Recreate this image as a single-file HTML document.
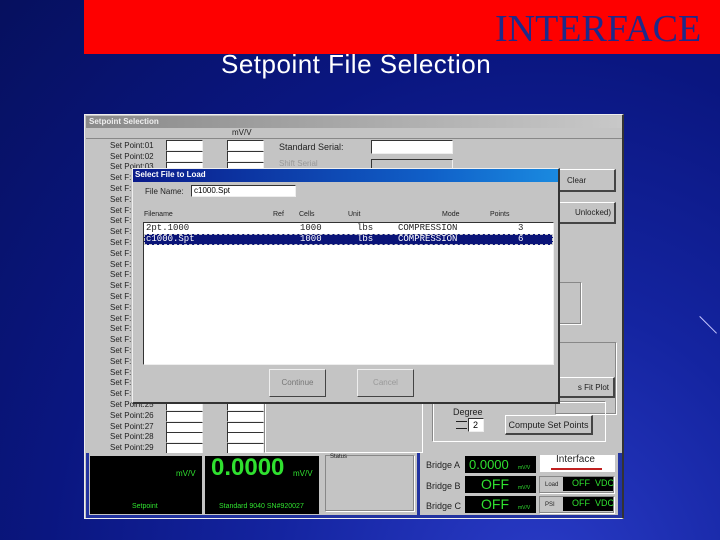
<!DOCTYPE html>
<html><head><meta charset="utf-8"><style>
*{margin:0;padding:0;box-sizing:border-box}
body{width:720px;height:540px;overflow:hidden;position:relative;font-family:"Liberation Sans",sans-serif;
background:radial-gradient(ellipse at 75% 110%,#2a3cc8 0%,#1424a0 35%,#0a1680 65%,#06105e 100%)}
.a{position:absolute}
.t{position:absolute;font-size:8px;color:#222;white-space:nowrap;line-height:10px}
.in{position:absolute;background:#fff;border-top:1px solid #333;border-left:1px solid #333;border-right:1px solid #eee;border-bottom:1px solid #eee}
.btn{position:absolute;background:#c4c4c4;border:1px solid #fff;border-right:2px solid #444;border-bottom:2px solid #444;font-size:8px;color:#222;text-align:center}
.grp{position:absolute;border:1px solid #888;box-shadow:1px 1px 0 #fff}
.blk{position:absolute;background:#000}
.g{color:#2fe02f}
.mono{font-family:"Liberation Mono",monospace}
</style></head><body>
<div class="a" style="left:84px;top:0;width:636px;height:54px;background:#fe0000"></div>
<div class="a" style="left:495px;top:8px;font-family:'Liberation Serif',serif;font-size:38px;color:#1e2a8a;line-height:42px">INTERFACE</div>
<div class="a" style="left:221px;top:49px;font-size:26px;letter-spacing:0.5px;color:#fff;line-height:30px">Setpoint File Selection</div>
<div class="a" style="left:700px;top:316px;width:24px;height:1px;background:#c8c8ff;transform:rotate(45deg);transform-origin:0 0"></div>

<!-- app window -->
<div class="a" style="left:84px;top:114px;width:540px;height:405px;background:#c4c4c4;border:1px solid #eee;border-right:2px solid #333"></div>
<div class="a" style="left:86px;top:116px;width:536px;height:12px;background:linear-gradient(90deg,#8a8a8a,#c8c8c8)"></div>
<div class="t" style="left:89px;top:117px;color:#eee;font-weight:bold">Setpoint Selection</div>
<div class="a" style="left:86px;top:138px;width:536px;height:1px;background:#888"></div>
<div class="t" style="left:232px;top:128px">mV/V</div>

<div class="t" style="left:110px;top:141px">Set Point:01</div>
<div class="t" style="left:110px;top:152px">Set Point:02</div>
<div class="t" style="left:110px;top:162px">Set Point:03</div>
<div class="t" style="left:110px;top:173px">Set F:</div>
<div class="t" style="left:110px;top:184px">Set F:</div>
<div class="t" style="left:110px;top:195px">Set F:</div>
<div class="t" style="left:110px;top:206px">Set F:</div>
<div class="t" style="left:110px;top:216px">Set F:</div>
<div class="t" style="left:110px;top:227px">Set F:</div>
<div class="t" style="left:110px;top:238px">Set F:</div>
<div class="t" style="left:110px;top:249px">Set F:</div>
<div class="t" style="left:110px;top:260px">Set F:</div>
<div class="t" style="left:110px;top:270px">Set F:</div>
<div class="t" style="left:110px;top:281px">Set F:</div>
<div class="t" style="left:110px;top:292px">Set F:</div>
<div class="t" style="left:110px;top:303px">Set F:</div>
<div class="t" style="left:110px;top:314px">Set F:</div>
<div class="t" style="left:110px;top:324px">Set F:</div>
<div class="t" style="left:110px;top:335px">Set F:</div>
<div class="t" style="left:110px;top:346px">Set F:</div>
<div class="t" style="left:110px;top:357px">Set F:</div>
<div class="t" style="left:110px;top:368px">Set F:</div>
<div class="t" style="left:110px;top:378px">Set F:</div>
<div class="t" style="left:110px;top:389px">Set F:</div>
<div class="t" style="left:110px;top:400px">Set Point:25</div>
<div class="t" style="left:110px;top:411px">Set Point:26</div>
<div class="t" style="left:110px;top:422px">Set Point:27</div>
<div class="t" style="left:110px;top:432px">Set Point:28</div>
<div class="t" style="left:110px;top:443px">Set Point:29</div>

<div class="in" style="left:166px;top:140px;width:37px;height:11px"></div><div class="in" style="left:227px;top:140px;width:37px;height:11px"></div>
<div class="in" style="left:166px;top:151px;width:37px;height:11px"></div><div class="in" style="left:227px;top:151px;width:37px;height:11px"></div>
<div class="in" style="left:166px;top:162px;width:37px;height:11px"></div><div class="in" style="left:227px;top:162px;width:37px;height:11px"></div>
<div class="in" style="left:166px;top:400px;width:37px;height:11px"></div><div class="in" style="left:227px;top:400px;width:37px;height:11px"></div>
<div class="in" style="left:166px;top:411px;width:37px;height:11px"></div><div class="in" style="left:227px;top:411px;width:37px;height:11px"></div>
<div class="in" style="left:166px;top:422px;width:37px;height:11px"></div><div class="in" style="left:227px;top:422px;width:37px;height:11px"></div>
<div class="in" style="left:166px;top:432px;width:37px;height:11px"></div><div class="in" style="left:227px;top:432px;width:37px;height:11px"></div>
<div class="in" style="left:166px;top:443px;width:37px;height:11px"></div><div class="in" style="left:227px;top:443px;width:37px;height:11px"></div>

<div class="t" style="left:279px;top:142px;font-size:9px">Standard Serial:</div>
<div class="in" style="left:371px;top:140px;width:82px;height:14px"></div>
<div class="t" style="left:279px;top:159px;color:#999">Shift Serial</div>
<div class="in" style="left:371px;top:159px;width:82px;height:12px;background:#c4c4c4"></div>

<div class="btn" style="left:555px;top:169px;width:61px;height:23px;line-height:21px;text-align:left;padding-left:11px">Clear</div>
<div class="btn" style="left:555px;top:202px;width:61px;height:22px;line-height:20px;text-align:right;padding-right:3px">Unlocked)</div>
<div class="grp" style="left:555px;top:282px;width:26px;height:42px"></div>
<div class="grp" style="left:555px;top:342px;width:61px;height:72px"></div>
<div class="btn" style="left:555px;top:377px;width:60px;height:21px;line-height:19px;text-align:right;padding-right:4px">s Fit Plot</div>
<div class="grp" style="left:265px;top:400px;width:158px;height:53px;border-color:#fff;box-shadow:-1px -1px 0 #888"></div>
<div class="grp" style="left:433px;top:402px;width:173px;height:40px;border-color:#fff;box-shadow:-1px -1px 0 #888"></div>
<div class="t" style="left:453px;top:407px;font-size:9px">Degree</div>
<div class="in" style="left:468px;top:418px;width:16px;height:14px;font-size:9px;padding-left:4px;line-height:12px">2</div>
<div class="a" style="left:456px;top:421px;width:11px;height:1px;background:#222"></div>
<div class="a" style="left:456px;top:428px;width:11px;height:1px;background:#222"></div>
<div class="btn" style="left:505px;top:415px;width:88px;height:20px;line-height:18px;font-size:9px">Compute Set Points</div>

<!-- bottom status area -->
<div class="a" style="left:86px;top:453px;width:536px;height:62px;background:#c4c4c4"></div>
<div class="a" style="left:86px;top:515px;width:536px;height:3px;background:#2233a0"></div>
<div class="a" style="left:86px;top:453px;width:3px;height:62px;background:#2233a0"></div>
<div class="a" style="left:417px;top:453px;width:3px;height:62px;background:#2233a0"></div>
<div class="a" style="left:618px;top:453px;width:4px;height:62px;background:#2233a0"></div>
<div class="blk" style="left:90px;top:456px;width:112px;height:58px"></div>
<div class="t g" style="left:176px;top:469px;font-size:8px">mV/V</div>
<div class="t g" style="left:132px;top:502px;font-size:7px">Setpoint</div>
<div class="blk" style="left:205px;top:456px;width:114px;height:58px"></div>
<div class="a g" style="left:211px;top:454px;font-size:24px;font-weight:bold;line-height:28px">0.0000</div>
<div class="t g" style="left:293px;top:469px;font-size:8px">mV/V</div>
<div class="t g" style="left:219px;top:502px;font-size:7px">Standard 9040 SN#920027</div>
<div class="grp" style="left:325px;top:455px;width:89px;height:56px"></div>
<div class="t" style="left:330px;top:452px;font-size:6px">Status</div>
<div class="t" style="left:426px;top:460px;font-size:9px">Bridge A</div>
<div class="t" style="left:426px;top:481px;font-size:9px">Bridge B</div>
<div class="t" style="left:426px;top:501px;font-size:9px">Bridge C</div>
<div class="blk" style="left:465px;top:456px;width:71px;height:17px"></div>
<div class="blk" style="left:465px;top:476px;width:71px;height:17px"></div>
<div class="blk" style="left:465px;top:496px;width:71px;height:17px"></div>
<div class="t g" style="left:469px;top:457px;font-size:13px;line-height:15px">0.0000</div>
<div class="t g" style="left:481px;top:477px;font-size:14px;line-height:15px">OFF</div>
<div class="t g" style="left:481px;top:497px;font-size:14px;line-height:15px">OFF</div>
<div class="t g" style="left:518px;top:463px;font-size:5px">mV/V</div>
<div class="t g" style="left:518px;top:483px;font-size:5px">mV/V</div>
<div class="t g" style="left:518px;top:503px;font-size:5px">mV/V</div>
<div class="a" style="left:540px;top:455px;width:75px;height:17px;background:#fff"></div>
<div class="t" style="left:556px;top:455px;font-size:10px">Interface</div>
<div class="a" style="left:551px;top:468px;width:51px;height:2px;background:#c02020"></div>
<div class="grp" style="left:539px;top:476px;width:75px;height:17px"></div>
<div class="t" style="left:545px;top:480px;font-size:6px">Load</div>
<div class="blk" style="left:563px;top:477px;width:50px;height:14px"></div>
<div class="t g" style="left:572px;top:478px;font-size:9px">OFF&nbsp; VDC</div>
<div class="grp" style="left:539px;top:496px;width:75px;height:17px"></div>
<div class="t" style="left:545px;top:500px;font-size:6px">PSI</div>
<div class="blk" style="left:563px;top:497px;width:50px;height:14px"></div>
<div class="t g" style="left:572px;top:498px;font-size:9px">OFF&nbsp; VDC</div>

<!-- dialog -->
<div class="a" style="left:132px;top:168px;width:428px;height:236px;background:#c4c4c4;border:1px solid #eee;border-right:2px solid #333;border-bottom:2px solid #333"></div>
<div class="a" style="left:133px;top:169px;width:425px;height:13px;background:linear-gradient(90deg,#0a1a8a,#1060c8 70%,#1a8ae0)"></div>
<div class="t" style="left:135px;top:170px;color:#fff;font-weight:bold;font-size:8px">Select File to Load</div>
<div class="t" style="left:145px;top:187px;font-size:8px">File Name:</div>
<div class="in" style="left:191px;top:185px;width:105px;height:12px;font-size:8px;line-height:10px;padding-left:2px">c1000.Spt</div>
<div class="t" style="left:144px;top:210px;font-size:7px">Filename</div>
<div class="t" style="left:273px;top:210px;font-size:7px">Ref</div>
<div class="t" style="left:299px;top:210px;font-size:7px">Cells</div>
<div class="t" style="left:348px;top:210px;font-size:7px">Unit</div>
<div class="t" style="left:442px;top:210px;font-size:7px">Mode</div>
<div class="t" style="left:490px;top:210px;font-size:7px">Points</div>
<div class="in" style="left:143px;top:222px;width:411px;height:143px"></div>
<div class="a" style="left:144px;top:234px;width:409px;height:11px;background:#0a1478;border:1px dashed #ccc"></div>
<div class="t mono" style="left:146px;top:223px;font-size:9px">2pt.1000</div>
<div class="t mono" style="left:300px;top:223px;font-size:9px">1000</div>
<div class="t mono" style="left:357px;top:223px;font-size:9px">lbs</div>
<div class="t mono" style="left:398px;top:223px;font-size:9px">COMPRESSION</div>
<div class="t mono" style="left:518px;top:223px;font-size:9px">3</div>
<div class="t mono" style="left:146px;top:234px;font-size:9px;color:#fff">c1000.Spt</div>
<div class="t mono" style="left:300px;top:234px;font-size:9px;color:#fff">1000</div>
<div class="t mono" style="left:357px;top:234px;font-size:9px;color:#fff">lbs</div>
<div class="t mono" style="left:398px;top:234px;font-size:9px;color:#fff">COMPRESSION</div>
<div class="t mono" style="left:518px;top:234px;font-size:9px;color:#fff">6</div>
<div class="btn" style="left:269px;top:369px;width:57px;height:28px;line-height:26px;color:#777;border-color:#eee #444 #444 #eee;border-width:1px">Continue</div>
<div class="btn" style="left:357px;top:369px;width:57px;height:28px;line-height:26px;color:#999;border-color:#eee #444 #444 #eee;border-width:1px">Cancel</div>
</body></html>
